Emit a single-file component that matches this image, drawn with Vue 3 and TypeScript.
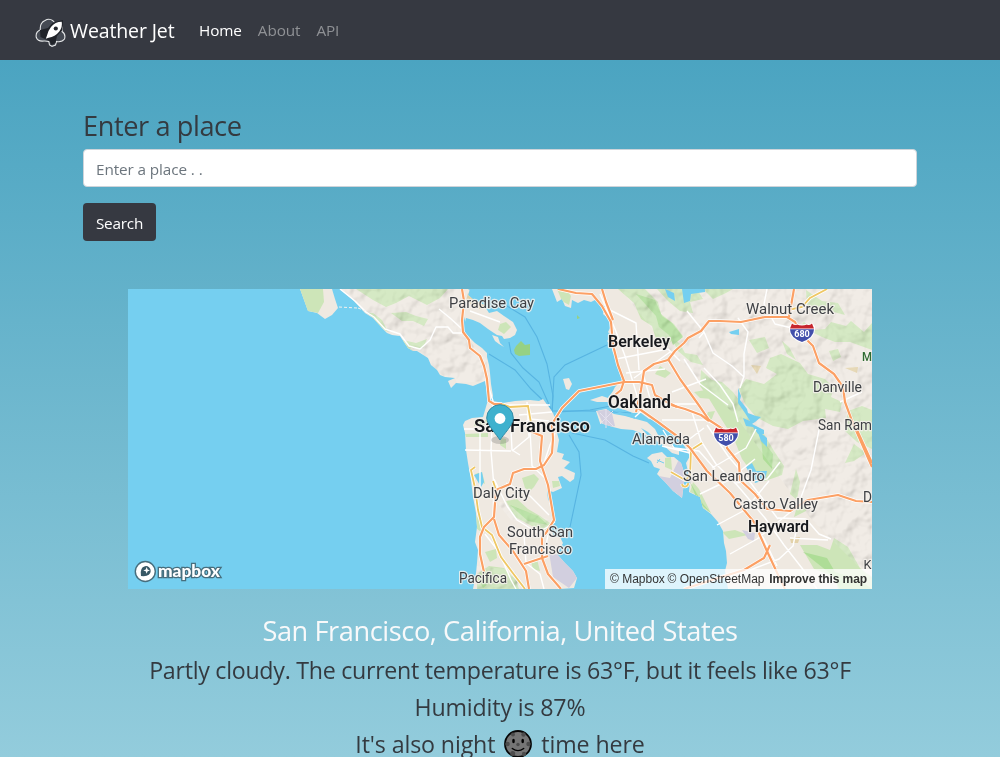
<script setup lang="ts">
interface NavLink { label: string; active?: boolean }
interface PlaceLabel { text: string; x: number; y: number; width: number; size: number; major?: boolean; park?: boolean }

const links: NavLink[] = [{ label: 'Home', active: true }, { label: 'About' }, { label: 'API' }]

const land: string[] = [
  'M300 289 L304 300 308 311 317 313 325 319 332 315 338 308 335 299 332 289Z',
  'M340 289 L353 300 365 313 373 318 382 328 387 333 392 335 400 336 408 348 413 351 417 351 428 358 431 365 437 370 440 375 445 377 455 378 448 381 451 388 456 383 466 384 473 386 485 381 489 402 493 396 491 384 490 373 489 365 487 357 487 353 482 348 475 343 469 337 464 332 465 322 466 318 473 320 480 323 488 329 497 335 502 336 504 339 510 338 515 335 517 330 513 322 504 316 497 311 489 313 484 305 475 301 468 295 470 289Z',
  'M492 335 L498 337 500 343 504 347 499 344 495 341Z',
  'M552 289 L557 302 562 299 565 306 571 308 572 300 578 303 584 300 591 302 597 299 600 304 605 306 603 314 610 320 611 326 608 332 612 337 607 341 611 345 613 353 618 357 619 370 622 380 615 387 613 391 608 398 602 396 590 400 597 402 610 402 614 407 625 410 633 413 641 413 649 419 658 420 664 427 677 436 685 447 690 456 686 463 690 480 689 492 693 494 700 497 703 508 711 514 718 522 723 531 724 543 726 551 727 563 725 571 728 589 872 589 872 289Z',
  'M596 411 L606 409 614 414 625 416 636 419 647 422 655 429 659 437 669 444 679 450 679 455 672 453 663 445 654 440 643 434 633 430 621 429 613 427 600 423Z',
  'M647 458 L652 454 662 452 667 457 674 457 681 463 685 475 682 498 673 491 665 482 657 474 660 469 654 467 651 461Z',
  'M563 379 L569 378 572 384 569 390 566 389Z',
  'M463 425 L465 421 472 418 483 417 488 400 503 403 515 401 530 400 539 401 543 399 549 407 553 413 556 421 556 429 559 440 557 452 564 454 562 459 570 462 564 468 575 473 574 479 570 482 562 476 558 477 562 488 553 492 547 490 548 499 551 505 551 514 553 520 550 528 554 536 560 537 563 543 557 554 564 562 573 571 577 578 574 588 560 589 473 589 476 573 477 563 478 550 475 542 477 527 476 513 473 497 471 480 468 463 466 450 465 433Z'
]

const greens: string[] = [
  'M300 289 L307 311 318 313 324 302 323 289Z',
  'M356 289 L373 300 386 307 396 303 409 296 427 305 440 298 448 289Z',
  'M367 313 L373 318 383 329 388 332 382 320 373 313Z',
  'M391 313 L406 312 416 316 428 319 424 326 413 321 402 321Z',
  'M403 340 L416 343 427 339 423 348 410 348 414 352 406 350Z',
  'M500 324 L506 322 511 327 504 334 498 330Z',
  'M557 289 L562 301 569 305 571 296 566 289Z',
  'M618 289 L634 303 641 319 652 326 656 339 668 346 674 337 683 336 674 324 661 314 658 302 645 289Z',
  'M657 289 L668 301 680 311 693 313 690 302 703 299 697 289Z',
  'M703 289 L713 299 726 293 733 289Z',
  'M670 335 L680 344 685 353 697 355 703 365 691 362 678 351Z',
  'M655 374 L660 366 671 373 665 378Z',
  'M804 322 L814 330 825 329 831 322 846 326 851 321 864 332 872 323 872 350 850 342 835 342 822 337 810 331 797 330Z',
  'M806 290 L822 301 838 303 845 315 830 311 818 314 807 306Z',
  'M749 340 L765 337 769 348 757 353Z',
  'M782 341 L789 347 796 360 787 354Z',
  'M829 351 L838 349 841 357 833 361Z',
  'M770 358 L781 354 800 363 808 374 825 379 834 388 831 397 842 402 840 412 825 409 826 418 803 421 788 429 773 426 756 417 745 404 739 389 746 379 764 384 777 374 766 368Z',
  'M701 370 L712 380 722 382 733 392 742 404 751 423 764 434 774 451 784 466 782 475 765 481 751 471 742 459 734 439 722 420 708 397 700 386Z',
  'M694 392 L711 389 712 399 700 398Z',
  'M708 412 L715 411 711 421 705 419Z',
  'M665 458 L671 457 672 470 665 467Z',
  'M848 411 L862 406 872 410 872 449 857 442 845 431Z',
  'M845 463 L854 444 866 453 854 461Z',
  'M796 469 L800 482 797 500 790 494Z',
  'M474 421 L491 420 492 423 474 426Z',
  'M465 434 L488 433 488 437 466 437Z',
  'M501 438 L506 439 506 449 500 445Z',
  'M475 474 L482 472 485 484 477 480Z',
  'M476 515 L480 522 481 532 476 528Z',
  'M552 481 L559 481 560 486 553 488Z',
  'M522 478 L534 474 539 479 534 487 530 491 525 488Z',
  'M506 501 L517 499 528 509 540 516 550 523 547 530 532 526 515 517Z',
  'M477 574 L489 566 504 568 516 580 519 589 477 589Z',
  'M485 552 L496 549 497 558 490 562Z',
  'M531 562 L537 559 540 571 533 569Z',
  'M693 482 L699 489 704 499 711 513 702 508 697 495 690 492Z',
  'M800 545 L817 545 830 550 834 538 848 547 860 568 872 577 872 589 838 589 835 577 814 569Z',
  'M722 532 L735 530 748 535 729 539Z',
  'M798 503 L809 498 806 511 794 517Z'
]

const roads: string[] = [
  'M340 289 L355 301 366 312 374 317 385 329 400 334 409 346 420 349 430 340 436 327 448 327 453 333 463 333',
  'M439 309 L450 318 462 329M470 311 L500 322',
  'M487 382 L493 401 491 451 494 487 493 516M465 450 L511 451M464 429 L512 429 530 419 549 421M480 430 L480 490M510 409 L512 450 520 455M527 402 L529 437 512 451M519 415 L552 412M505 405 L550 405M530 430 L532 466 545 478M544 463 L550 445 555 433M494 479 L507 506 517 520 538 533 555 522M506 483 L530 496 549 515M524 535 L526 563 540 574 544 589M485 534 L499 552 511 580 516 589M548 535 L544 555',
  'M600 294 L615 329 625 356 632 379 641 409M610 310 L636 323 639 370M616 359 L668 349 680 361M634 378 L670 352M626 373 L665 369M642 370 L651 402 635 417M630 404 L700 404M662 420 L705 420 722 428M672 392 L706 379M684 359 L700 384 728 405',
  'M663 430 L674 448 699 451 715 469M662 446 L690 453M683 444 L704 428M692 412 L701 441 716 464 737 485 765 518 784 545 805 572 817 589M707 425 L728 456 750 482 778 519M712 468 L746 448 756 429M735 483 L767 479 780 462M700 494 L729 480 755 459M717 525 L745 510 769 481M730 554 L757 539 793 510M742 505 L764 539 777 566M750 570 L779 559 793 546 798 522M778 518 L806 519 819 534 831 539M790 538 L828 540M800 500 L811 470 819 430',
  'M687 311 L704 332 713 353 732 366 744 377 744 354 748 332 738 318M740 388 L744 376 M704 332L699 338M767 289 L764 304 775 324 792 328M840 402 L862 392M704 368 L720 385 733 404 738 422'
]
const highways: string[] = [
  'M462 289 L464 301 462 320 463 332 469 340 470 348 480 356 484 366 487 379 489 401 494 404 502 404',
  'M558 289 L576 293 592 294 602 306 611 322 613 345 618 365 624 381 621 390 615 395M602 289 L606 302 613 320',
  'M552 424 L562 408 579 391 604 386 624 382 639 382 652 385 655 395 667 402 677 407',
  'M636 412 L641 390 644 371 654 364 668 360 675 351 684 343 688 338 701 331 709 321 720 321 741 322 765 317 787 317 795 322 802 335 813 346 819 363 834 374 843 387 845 402 852 421 865 451 872 467',
  'M668 359 L680 379 698 404 709 420 726 431 727 448 739 463 740 480 755 494 767 509 790 511 808 500 838 495 856 501 872 502',
  'M789 317 L794 289',
  'M638 408 L658 422 677 436 690 448 707 471 730 493 754 522 766 549 780 579 785 589',
  'M671 405 L685 409 701 415 709 421',
  'M530 431 L542 436 540 461 548 485 554 520 546 533 542 537 542 558 548 574 561 589',
  'M552 424 L553 439 552 453 544 465 536 469 524 469 513 473 510 484 496 490 494 517 484 527 480 537 480 554 484 572',
  'M494 519 L499 535 513 551 526 571 529 589M524 564 L542 558 548 556',
  'M684 589 L715 579 744 570 764 558 770 545',
  'M857 430 L872 463'
]
const minorHighways: string[] = [
  'M475 467 L471 470 475 488 478 510 482 527 492 535 501 557 512 572 525 589',
  'M493 481 L496 490M502 404 L510 407 528 406 531 423',
  'M671 472 L685 480 690 476 691 450 702 443M682 484 A3 3 0 1 0 688 483',
  'M788 310 L802 307 810 298 827 289'
]
const ferries: string[] = [
  'M507 306 L525 317 537 337 547 364 553 396 552 415',
  'M509 342 L511 353 523 368 539 382 551 409',
  'M489 354 L515 370 531 389 550 407',
  'M552 410 L554 377 565 365 607 345',
  'M552 411 L598 411 631 413',
  'M559 412 L590 410 621 404',
  'M569 435 L579 452 581 475 570 527',
  'M572 433 L605 440 633 456 649 463'
]
const lakes: string[] = [
  'M462 331 L462 323 464 317 468 331Z',
  'M665 289 L668 297 675 301 674 293Z', 'M682 289 L684 303 690 301 691 294 705 292 705 289Z',
  'M468 289 L477 290 485 294 475 295Z', 'M729 332 L739 329 739 335 731 334Z',
  'M738 388 L741 396 740 400 747 409 748 413 756 416 761 417 755 422 752 424 764 430 764 434 758 434 753 427 746 426 743 418 750 421 745 413 738 403Z',
  'M757 430 L767 438 767 447 761 441Z',
  'M746 467 L752 463 756 471 767 471 765 480 755 483Z',
  'M474 475 L482 472 484 482 481 487Z', 'M614 411 L637 415 635 419Z', 'M641 428 L648 432 658 442 650 438Z'
]

const labels: PlaceLabel[] = [
  { text: 'Paradise Cay', x: 449, y: 308, width: 85, size: 14.5 },
  { text: 'Berkeley', x: 608, y: 347, width: 62, size: 16, major: true },
  { text: 'Oakland', x: 608, y: 408, width: 63, size: 18, major: true },
  { text: 'San Francisco', x: 474, y: 432, width: 116, size: 18.5, major: true },
  { text: 'Walnut Creek', x: 746, y: 314, width: 88, size: 14.5 },
  { text: 'Danville', x: 813, y: 392, width: 49, size: 14.5 },
  { text: 'San Ram', x: 818, y: 430, width: 54, size: 14.5 },
  { text: 'Alameda', x: 632, y: 444, width: 58, size: 14.5 },
  { text: 'San Leandro', x: 683, y: 481, width: 82, size: 14.5 },
  { text: 'Castro Valley', x: 733, y: 509, width: 85, size: 14.5 },
  { text: 'Hayward', x: 748, y: 532, width: 61, size: 16, major: true },
  { text: 'Daly City', x: 473, y: 498, width: 57, size: 14.5 },
  { text: 'South San', x: 507, y: 537, width: 66, size: 14.5 },
  { text: 'Francisco', x: 509, y: 554, width: 63, size: 14.5 },
  { text: 'Pacifica', x: 459, y: 583, width: 48, size: 14.5 },
  { text: 'M', x: 862, y: 361, width: 10, size: 12.5, park: true },
  { text: 'D', x: 863, y: 502, width: 9, size: 14.5 },
  { text: 'K', x: 863.5, y: 569, width: 8, size: 13 }
]
const shields = [{ num: '680', x: 802, y: 332.5 }, { num: '580', x: 726, y: 436.5 }]
</script>

<template>
  <div class="page">
    <nav class="navbar">
      <svg class="logo" viewBox="0 0 32 32">
        <path d="M10 3.5 Q14 .8 18 3.8 Q20 5.5 20 7 Q26 6 27.5 11 Q27.5 13 27 14.5 Q31 17 29.5 22 Q27 25.5 21.5 24.5 L20.5 28 17 29.3 14.5 28 13.8 24.5 Q11 23.8 9 24 Q3 24.8 1.3 20.5 Q.2 15 5.4 12.8 Q4.5 6 10 3.5Z" fill="#454a53" stroke="#e3e5e6" stroke-width="1.1" />
        <path d="M5 13 L13 11 18 5.5 28 3 27.5 13 22 19 20.5 26 16.5 28 14.5 24 10 22 5.5 20Z" fill="#202329" />
        <path d="M26.7 4.7 Q20 4.7 16 10 Q12.5 14.5 12 18.5 L10.8 21.8 13.6 20.7 Q20 20 24.3 14.5 Q27.7 10 26.7 4.7Z" fill="#fff" />
        <circle cx="20.8" cy="11.5" r="2.1" fill="#25282d" />
      </svg>
      <span class="brand">Weather Jet</span>
      <a v-for="l in links" :key="l.label" class="nav-link" :class="{ active: l.active }">{{ l.label }}</a>
    </nav>

    <main>
      <form class="search" @submit.prevent>
        <label class="search-title" for="place">Enter a place</label>
        <input id="place" class="field" type="text" placeholder="Enter a place . .">
        <button class="button" type="submit">Search</button>
      </form>

      <section class="map">
        <svg class="map-canvas" viewBox="128 289 744 300">
          <defs>
            <filter id="relief" x="0" y="0" width="100%" height="100%">
              <feTurbulence type="fractalNoise" baseFrequency="0.05" numOctaves="3" seed="8" />
              <feDiffuseLighting surfaceScale="8" diffuseConstant="1.15" lighting-color="#fff">
                <feDistantLight azimuth="225" elevation="52" />
              </feDiffuseLighting>
            </filter>
            <clipPath id="hills">
              <path d="M340 289 L385 329 445 377 455 378 457 383 485 381 487 360 462 333 460 289Z" />
              <path d="M620 289 L665 345 735 415 785 485 812 520 872 580 872 289Z" />
              <path d="M495 500 L550 520 549 530 511 520Z M477 566 L515 570 523 589 477 589Z" />
            </clipPath>
            <clipPath id="ground"><path v-for="d in land" :key="d" :d="d" /></clipPath>
          </defs>
          <rect x="128" y="289" width="744" height="300" fill="#75cff0" />
          <g fill="none" stroke="#57b4e1" stroke-width="1.1">
            <path v-for="d in ferries" :key="d" :d="d" />
          </g>
          <g fill="#efe9e1">
            <path v-for="d in land" :key="d" :d="d" />
          </g>
          <g clip-path="url(#ground)">
            <g fill="#cde5b8">
              <path v-for="d in greens" :key="d" :d="d" />
            </g>
            <g fill="#aedd97">
              <path d="M636 294L656 316 659 327 669 335 673 345 683 337 672 323 662 316 655 300ZM690 482L703 504 711 513 698 502ZM477 575L490 571 494 579 483 588ZM510 505L538 516 548 525 528 521Z" />
              <path d="M761 438L773 454 772 469 763 459ZM803 552L827 558 835 572 858 579 872 589 840 589 832 575Z" />
            </g>
            <g fill="#d2cfdf">
              <path d="M597 411L611 409 615 426 605 428ZM653 475L670 478 680 457 693 478 682 498ZM549 552L565 557 577 578 569 588 553 577ZM742 530L755 533 754 541 748 539Z" />
            </g>
            <path d="M468 293L490 304 480 309 466 301ZM466 325L473 327 472 332 467 330ZM751 365L761 366 757 374ZM845 368L858 367 857 373ZM790 538L800 537 798 543 791 543Z" fill="#e3d2a9" />
          </g>
          <g clip-path="url(#hills)">
            <g clip-path="url(#ground)"><rect class="relief" x="340" y="289" width="532" height="300" filter="url(#relief)" /></g>
          </g>
          <g fill="#75cff0"><path v-for="d in lakes" :key="d" :d="d" /></g>
          <path d="M514 350L516 346 521 341 525 345 530 344 530 355 519 356 515 354ZM577 315L580 318 577 319Z" fill="#96d184" />
          <g class="roads"><path v-for="d in roads" :key="d" :d="d" /></g>
          <g class="roads minor-case"><path v-for="d in minorHighways" :key="d" :d="d" /></g>
          <g class="minor"><path v-for="d in minorHighways" :key="d" :d="d" /></g>
          <g class="highway-case"><path v-for="d in highways" :key="d" :d="d" /></g>
          <g class="highway"><path v-for="d in highways" :key="d" :d="d" /></g>
          <path d="M600 413L613 426M600 424L613 411M606 409V428" fill="none" stroke="#e4e1ee" />
          <path d="M657 460L664 463M660 459L657 463" fill="none" stroke="#75cff0" />
          <path d="M339 307L357 308M358 308L365 311" fill="none" stroke="#f5f1ed" stroke-dasharray="3 2" />
          <g v-for="l in labels" :key="l.text">
            <text class="label" :class="{ major: l.major, park: l.park }" :x="l.x" :y="l.y" :font-size="l.size" :textLength="l.width" lengthAdjust="spacingAndGlyphs">{{ l.text }}</text>
          </g>
          <g v-for="s in shields" :key="s.num" :transform="`translate(${s.x} ${s.y})`">
            <path d="M-10 -10 Q-7 -7 -5 -9 Q0 -7 5 -9 Q7 -7 10 -10 L13 -6 Q14 6 0 10.5 Q-14 6 -13 -6Z" fill="#fff" />
            <path d="M-10 -9 Q-7 -6.5 -5 -8 Q0 -6 5 -8 Q7 -6.5 10 -9 L12 -4 -12 -4Z" fill="#c7262d" />
            <path d="M-12 -3.3 H12 Q12 5 0 9.4 Q-12 5 -12 -3.3Z" fill="#424fab" />
            <text class="shield-number" x="0" y="4.6" textLength="15.5" lengthAdjust="spacingAndGlyphs">{{ s.num }}</text>
          </g>
          <ellipse cx="500" cy="440" rx="9" ry="4" fill="#444" opacity=".22" />
          <path d="M500 440 C497 435 487 425 486.7 418 A13.3 13.3 0 1 1 513.3 418 C513.3 425 503 435 500 440Z" fill="#3fb1ce" stroke="#338da8" />
          <circle cx="500" cy="418.5" r="5.4" fill="#fff" />
          <g class="mapbox-logo">
            <circle cx="145.3" cy="571.5" r="10" fill="#fff" stroke="#476e7d" stroke-width="1.4" />
            <path d="M141 576 Q139.5 567.5 145 566.2 A4.7 4.7 0 0 1 150.7 571 Q150.5 577 141 576Z" fill="#375865" />
            <path d="M146.7 566.9L147.6 569.4 150 570.4 147.6 571.3 146.7 573.8 145.7 571.3 143.3 570.4 145.7 569.4Z" fill="#fff" />
            <text x="158" y="576.6" textLength="62" lengthAdjust="spacingAndGlyphs">mapbox</text>
          </g>
        </svg>
        <div class="credits"><span>© Mapbox</span> <span>© OpenStreetMap</span> <strong>Improve this map</strong></div>
      </section>

      <section class="forecast">
        <h3>San Francisco, California, United States</h3>
        <p class="summary">Partly cloudy. The current temperature is 63°F, but it feels like 63°F</p>
        <p class="humidity">Humidity is 87%</p>
        <p class="daytime">
          <span>It's also night</span>
          <svg class="moon" viewBox="0 0 28 28">
            <circle cx="14" cy="14" r="13" fill="#757575" stroke="#050505" stroke-width="1.8" />
            <g fill="#4c4c4c">
              <circle cx="9" cy="4.5" r="2" /><circle cx="19.5" cy="4.5" r="2.2" /><circle cx="3.5" cy="14" r="2.3" /><circle cx="24.5" cy="14" r="2.2" /><circle cx="8.7" cy="23.6" r="2.5" /><circle cx="20" cy="24" r="2.2" /><circle cx="14" cy="14.5" r="1.7" />
            </g>
            <ellipse cx="9.5" cy="11" rx="1.3" ry="2.3" /><ellipse cx="18.7" cy="11" rx="1.3" ry="2.3" />
            <path d="M8.3 18.5 Q14 22.8 19.7 18.5" fill="none" stroke="#000" stroke-width="1.4" stroke-linecap="round" />
          </svg>
          <span>time here</span>
        </p>
      </section>
    </main>
  </div>
</template>

<style>
body { margin: 0; overflow: hidden; }
</style>

<style scoped>
* { box-sizing: border-box; }
.page { height: 757px; overflow: hidden; background: linear-gradient(#4ba4c1 60px, #93ccdc); color: #343a40; font-family: "Open Sans", "Noto Sans", sans-serif; }
.navbar { height: 60px; padding: 0 34px; display: flex; align-items: center; background: #363941; white-space: nowrap; }
.logo { width: 32px; height: 32px; flex: none; margin: 6px -1px 0 1px; }
.brand { width: 105px; margin-left: 4px; margin-right: 16px; color: #fff; font-size: 19.5px; letter-spacing: -.12px; }
.nav-link { padding: 0 8px; font-size: 15.3px; letter-spacing: -.1px; color: #8f9195; }
.nav-link.active { color: #fff; }
main { padding: 50px 83px 0; }
.search { display: flex; flex-direction: column; align-items: flex-start; }
.search-title { height: 39px; line-height: 32px; font-size: 27.2px; letter-spacing: -.42px; }
.field { width: 100%; height: 38px; padding: 2px 12px 1px; border: 1px solid #ced4da; border-radius: 4px; background: #fff; color: #495057; font: 15.3px "Open Sans", sans-serif; letter-spacing: -.1px; outline: none; }
.field::placeholder { color: #6c757d; opacity: 1; }
.button { width: 73px; height: 38px; margin-top: 16px; padding: 1px 0 0; border: 0; border-radius: 4px; background: #363941; color: #fff; font: 15.3px "Open Sans", sans-serif; letter-spacing: -.2px; }
.map { position: relative; width: 744px; height: 300px; margin: 48px auto 0; overflow: hidden; }
.map-canvas { display: block; width: 744px; height: 300px; }
.relief { mix-blend-mode: multiply; opacity: .17; }
.roads { fill: none; stroke: #fff; stroke-width: 1.4; stroke-linejoin: round; }
.roads.minor-case { stroke-width: 3.4; }
.minor { fill: none; stroke: #efc763; stroke-width: 1.8; }
.highway-case { fill: none; stroke: #fff; stroke-width: 3.5; stroke-linejoin: round; }
.highway { fill: none; stroke: #fca064; stroke-width: 2.2; stroke-linejoin: round; }
.label { font-family: Roboto, sans-serif; fill: #3e4044; stroke: #f5f1ec; stroke-width: 2.4px; stroke-opacity: .85; paint-order: stroke; stroke-linejoin: round; }
.label.major { font-weight: 600; fill: #17191d; }
.label.park { font-weight: 500; fill: #2f6b31; }
.shield-number { fill: #fff; font: bold 9px Roboto, sans-serif; text-anchor: middle; }
.mapbox-logo text { fill: #fff; font: 900 17px Lato, sans-serif; paint-order: stroke; stroke: #476e7d; stroke-width: 2.6px; }
.credits { position: absolute; right: 0; bottom: 0; width: 267px; height: 20px; padding: 0 5px; display: flex; justify-content: space-between; background: rgba(255,255,255,.76); color: #333; font: 12px/20px "Liberation Sans", Arial, sans-serif; white-space: nowrap; }
.credits strong { margin-left: 2px; letter-spacing: -.1px; }
.forecast { margin-top: 25px; text-align: center; white-space: nowrap; }
h3, p { margin: 0; font-weight: 400; }
h3 { height: 41px; line-height: 34px; color: #f8f9fa; font-size: 27.2px; letter-spacing: -.42px; }
p { height: 37px; line-height: 30px; font-size: 23.2px; letter-spacing: -.27px; }
.humidity { letter-spacing: -.15px; }
.daytime { display: flex; justify-content: center; align-items: center; height: 30px; letter-spacing: -.12px; }
.moon { width: 28px; height: 28px; margin: 0 9px; }
</style>
